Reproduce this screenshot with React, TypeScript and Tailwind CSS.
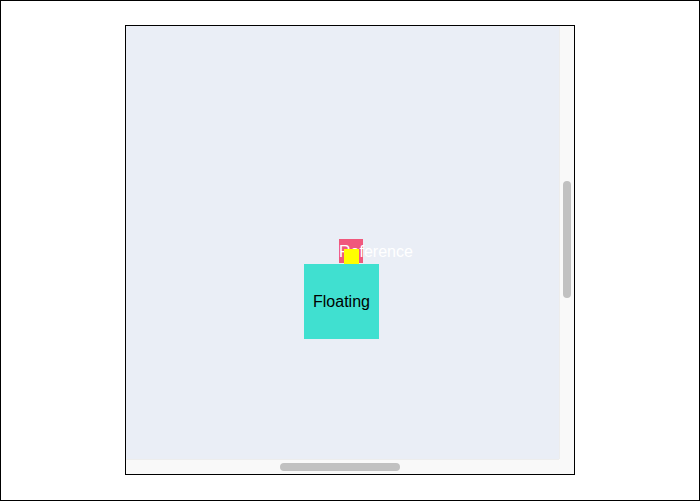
import { useEffect, useRef } from 'react';

export default function App() {
  const view = useRef<HTMLDivElement>(null);
  useEffect(() => {
    if (view.current) { view.current.scrollTop = 525; view.current.scrollLeft = 525; }
  }, []);
  return (
    <div className="flex h-[501px] w-[700px] items-start justify-center border border-black bg-white pt-6 font-['Liberation_Sans',Arial,sans-serif]">
      <div className="grid h-[450px] w-[450px] grid-cols-[433px_15px] grid-rows-[433px_15px] border border-black">
        <div ref={view} className="overflow-hidden">
          <div className="relative h-[1500px] w-[1500px] bg-[#eaeef6]">
            <div className="absolute left-[738px] top-[738px] h-6 w-6 bg-[#f0587c] text-base leading-[26px] text-white">Reference</div>
            <div className="absolute left-[703px] top-[763px] flex h-[75px] w-[75px] items-center justify-center bg-[#40e0d0] text-base text-black">
              Floating
              <div className="absolute left-[40px] top-[-15px] h-[15px] w-[15px] bg-[#ffff00]" />
            </div>
          </div>
        </div>
        {/* vertical scrollbar */}
        <div className="border-l border-[#ededed] bg-[#f9f9f9] pt-[155px]">
          <div className="ml-[3px] h-[117px] w-2 rounded-full bg-[#c1c1c1]" />
        </div>
        {/* horizontal scrollbar */}
        <div className="border-t border-[#ededed] bg-[#f9f9f9] pl-[154px] pt-[3px]">
          <div className="h-2 w-[120px] rounded-full bg-[#c1c1c1]" />
        </div>
        <div className="bg-[#f9f9f9]" />
      </div>
    </div>
  );
}
